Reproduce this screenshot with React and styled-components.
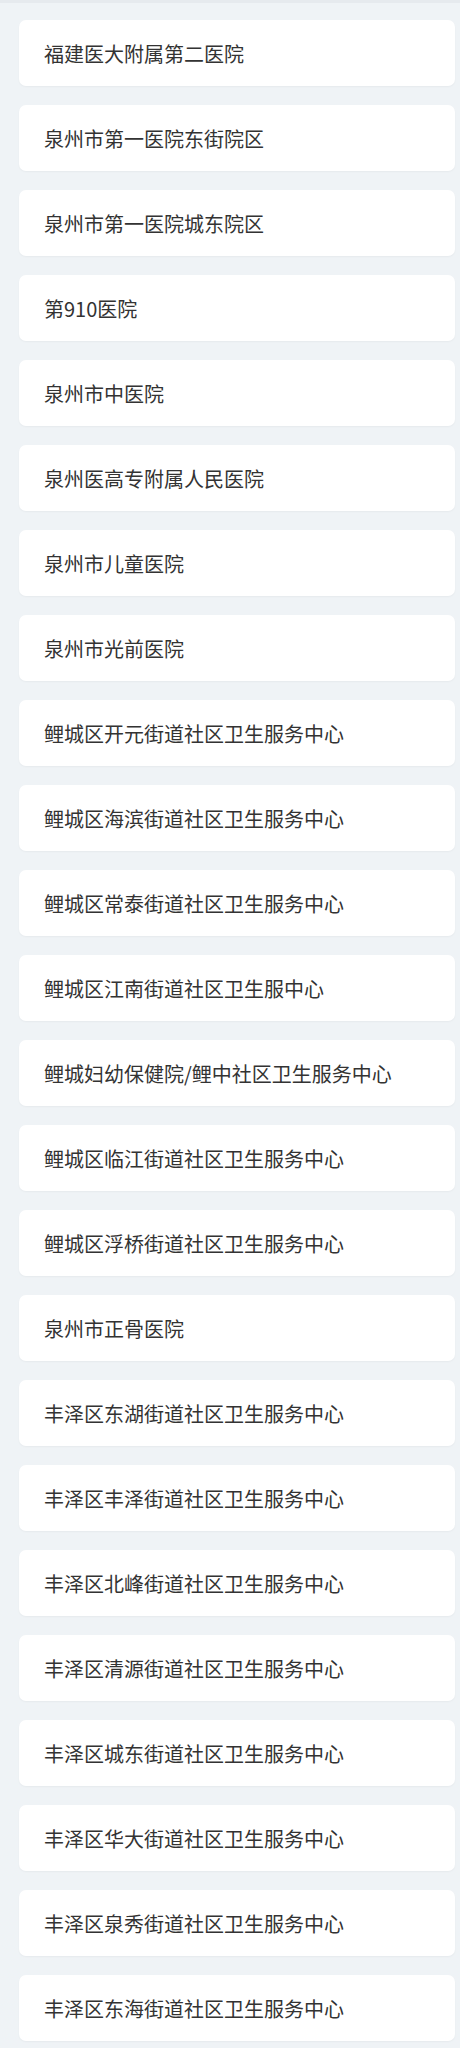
import React from "react";
import styled, { createGlobalStyle } from "styled-components";

const Global = createGlobalStyle`
  html, body { margin: 0; padding: 0; background: #eff3f6; }
  body { font-family: "Noto Sans CJK SC", "Noto Sans", sans-serif; }
`;

const Page = styled.div`
  border-top: 3px solid #e6eaee;
  padding: 17px 5px 8px 19px;
  display: flex;
  flex-direction: column;
  gap: 19px;
`;

const Card = styled.div`
  height: 66px;
  background: #ffffff;
  border-radius: 7px;
  box-shadow: 0 1px 2px rgba(0, 0, 0, 0.04);
  display: flex;
  align-items: center;
  padding-left: 25px;
  font-size: 20px;
  color: #333333;
`;

const items = [
  "福建医大附属第二医院",
  "泉州市第一医院东街院区",
  "泉州市第一医院城东院区",
  "第910医院",
  "泉州市中医院",
  "泉州医高专附属人民医院",
  "泉州市儿童医院",
  "泉州市光前医院",
  "鲤城区开元街道社区卫生服务中心",
  "鲤城区海滨街道社区卫生服务中心",
  "鲤城区常泰街道社区卫生服务中心",
  "鲤城区江南街道社区卫生服中心",
  "鲤城妇幼保健院/鲤中社区卫生服务中心",
  "鲤城区临江街道社区卫生服务中心",
  "鲤城区浮桥街道社区卫生服务中心",
  "泉州市正骨医院",
  "丰泽区东湖街道社区卫生服务中心",
  "丰泽区丰泽街道社区卫生服务中心",
  "丰泽区北峰街道社区卫生服务中心",
  "丰泽区清源街道社区卫生服务中心",
  "丰泽区城东街道社区卫生服务中心",
  "丰泽区华大街道社区卫生服务中心",
  "丰泽区泉秀街道社区卫生服务中心",
  "丰泽区东海街道社区卫生服务中心",
];

export default function App() {
  return (
    <>
      <Global />
      <Page>
        {items.map((t) => (
          <Card key={t}>{t}</Card>
        ))}
      </Page>
    </>
  );
}
